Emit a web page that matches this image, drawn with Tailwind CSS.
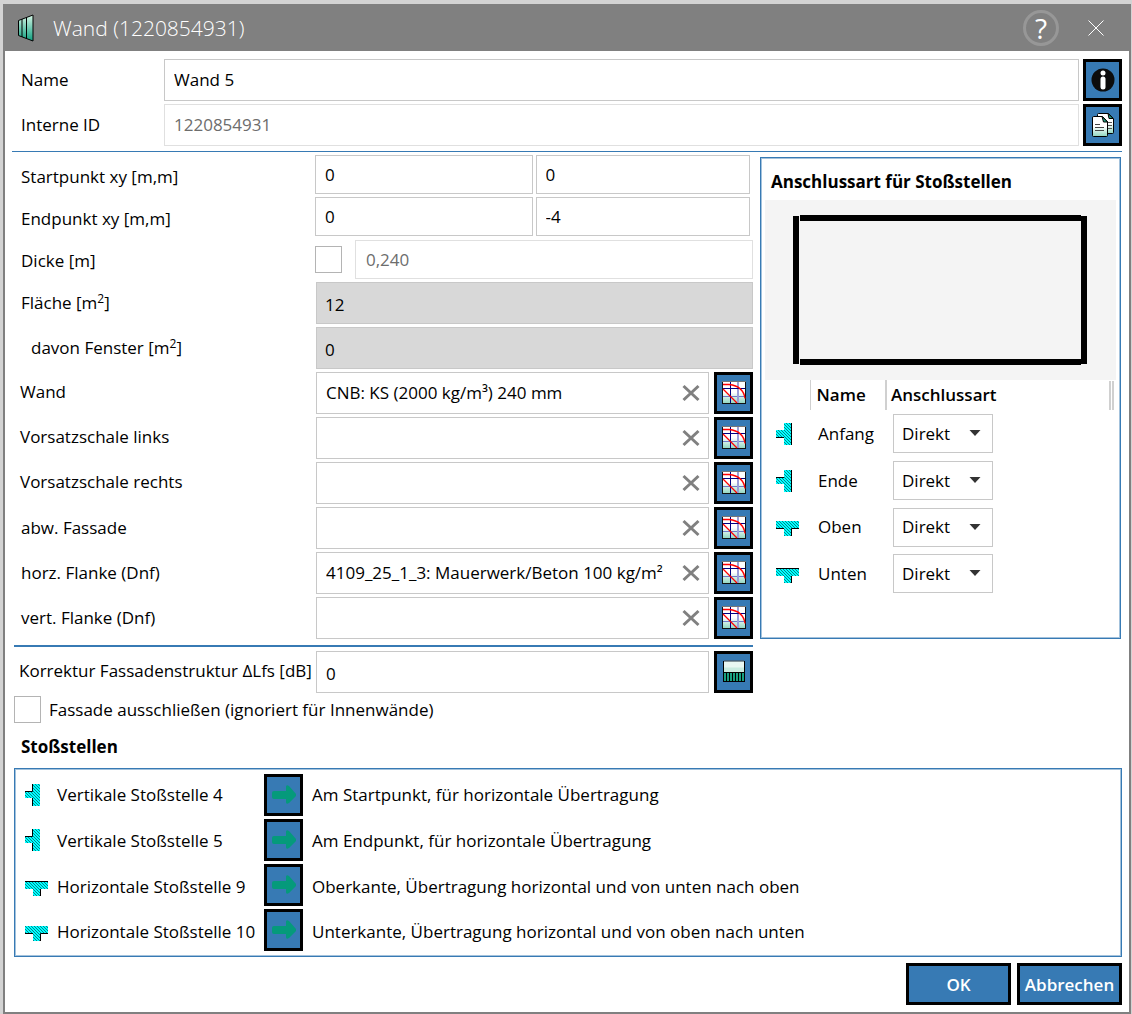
<!DOCTYPE html>
<html lang="de">
<head>
    <meta charset="UTF-8">
    <meta name="viewport" content="width=device-width, initial-scale=1.0">
    <title>Wand (1220854931)</title>
    <script src="https://cdn.jsdelivr.net/npm/@tailwindcss/browser@4"></script>
</head>
<body class="bg-[#d3d3d3] text-black text-[17px] leading-6 font-['Open_Sans','Noto_Sans',sans-serif]">
    <!-- Icons -->
    <svg class="absolute size-0">
        <defs>
            <linearGradient id="mint" x1="0" y1="0" x2="0" y2="1">
                <stop offset="0.5" stop-color="#ffffff"/>
                <stop offset="1" stop-color="#8fd6c0"/>
            </linearGradient>
            <linearGradient id="green" x1="0" y1="0" x2="0" y2="1">
                <stop offset="0" stop-color="#d4f5e4"/>
                <stop offset="1" stop-color="#0f9f80"/>
            </linearGradient>
            <pattern id="hatch" width="3" height="3" patternUnits="userSpaceOnUse">
                <rect width="3" height="3" fill="#00ffff"/>
                <path d="M0 0l3 3M-1 2l2 2M2 -1l2 2" stroke="#00505a" stroke-width="0.7"/>
            </pattern>
        </defs>
        <symbol id="chart" viewBox="0 0 24 24">
            <rect x="0.5" y="0.5" width="23" height="22" fill="url(#mint)"/>
            <path d="M0 15.5h23" stroke="#6f78c8"/>
            <path d="M16 1v22" stroke="#9b9fd8" stroke-width="2"/>
            <path d="M8.500 0v23M0 7.500h23" stroke="#000080"/>
            <path d="M0.500 0v23M23.500 1v22M0 22.500h24" stroke="#111" fill="none"/>
            <path d="M0 0.500h24" stroke="#777"/>
            <path d="M1 3.500h6c9 1 15 6 16 14M1 8l14 14" stroke="#ff0000" stroke-width="1.300" fill="none"/>
        </symbol>
        <symbol id="facade" viewBox="0 0 24 24">
            <rect x="1.500" y="1.500" width="21" height="11" fill="#c9ece0"/>
            <rect x="1.500" y="1.500" width="21" height="6" fill="#e9f8f2"/>
            <rect x="1.500" y="12.500" width="21" height="9" fill="#17a080"/>
            <path d="M1.500 1v21M22.500 1v21M1 12.500h22M1 21.500h22M4.500 13v9M7.500 13v9M10.500 13v9M13.500 13v9M16.500 13v9M19.500 13v9" stroke="#000"/>
            <path d="M2 1h20" stroke="#555"/>
        </symbol>
        <symbol id="arrow" viewBox="0 0 24 24">
            <path d="M2 8h12V4q0-3 3-1l7 8q1 1 0 2l-7 7q-3 2-3-1v-3H2q-2 0-2-2v-4q0-2 2-2z" fill="#059a7b"/>
        </symbol>
        <symbol id="joint-start" viewBox="0 0 24 24">
            <path d="M0 8h8V1h8v22H8v-8H0z" fill="url(#hatch)"/>
            <path d="M0 15.500h8M15.500 1v22" stroke="#000" fill="none"/>
        </symbol>
        <symbol id="joint-end" viewBox="0 0 24 24">
            <path d="M0 8h8V1h8v22H8v-8H0z" fill="url(#hatch)"/>
            <path d="M0 8.500h8M15.500 1v22" stroke="#000" fill="none"/>
        </symbol>
        <symbol id="joint-top" viewBox="0 0 24 24">
            <path d="M0 6h23v8h-7v7H8v-7H0z" fill="url(#hatch)"/>
            <path d="M0 13.500h8M15.500 21v-7.500H23" stroke="#000" fill="none"/>
        </symbol>
        <symbol id="joint-bottom" viewBox="0 0 24 24">
            <path d="M0 6h23v8h-7v7H8v-7H0z" fill="url(#hatch)"/>
            <path d="M0 6.500h23M15.500 14v7" stroke="#000" fill="none"/>
        </symbol>
        <symbol id="joint-vertical" viewBox="0 0 24 24">
            <path d="M0 8h8V1h7v22H8v-8H0z" fill="url(#hatch)"/>
            <path d="M7.500 1v7.500H0M7.500 15v8" stroke="#000" fill="none"/>
        </symbol>
        <symbol id="clear" viewBox="0 0 18 18">
            <path d="M1.500 2l15 14M16.500 2l-15 14" stroke="#808080" stroke-width="3"/>
        </symbol>
        <symbol id="caret" viewBox="0 0 12 6">
            <path d="M0.500 0h11L6 6z" fill="#333"/>
        </symbol>
    </svg>

    <div class="min-h-screen flex flex-col pt-1 pl-[3px] pr-px">
        <!-- Title bar -->
        <header class="bg-[#808080] h-[47px] flex items-center pl-[15px] pr-[27px]">
            <svg class="w-4 h-7" viewBox="0 0 16 28">
                <path d="M0.500 6.500L15 1v26L0.500 21.500z" fill="url(#green)" stroke="#000"/>
                <path d="M4 5v18M8.500 3.500v21" stroke="#000"/>
            </svg>
            <h1 class="ml-[19px] flex-1 text-[21px] leading-8 font-light text-white">Wand (1220854931)</h1>
            <button class="size-9 rounded-full border-3 border-[#979797] text-white text-[28px] leading-none flex items-center justify-center">?</button>
            <button class="ml-[29px] size-4" aria-label="Schließen">
                <svg class="size-4" viewBox="0 0 16 16"><path d="M0.500 0.500l15 15M15.500 0.500l-15 15" stroke="#fff"/></svg>
            </button>
        </header>

        <main class="flex-1 bg-white border-x-2 border-b-2 border-[#808080] pt-2 pl-[9px] pr-[7px] pb-[7px]">
            <!-- Name and ID -->
            <div class="grid grid-cols-[143px_1fr_39px] gap-y-[3px] items-center pl-[7px]">
                <label for="name">Name</label>
                <input id="name" type="text" value="Wand 5" class="h-[42px] mr-1 px-[9px] pb-0.5 border border-[#c8c8c8]">
                <button class="w-[39px] h-[42px] bg-[#377ab4] border-3 border-black flex items-center justify-center" aria-label="Info">
                    <svg class="size-6" viewBox="0 0 24 24">
                        <circle cx="12" cy="12" r="11.500" fill="#0c0c0c"/>
                        <circle cx="12" cy="5" r="2.500" fill="#fff"/>
                        <path d="M12 11v8" stroke="#fff" stroke-width="5" stroke-linecap="round"/>
                    </svg>
                </button>
                <label for="intern">Interne ID</label>
                <input id="intern" type="text" value="1220854931" disabled class="h-[42px] mr-1 px-[9px] pb-0.5 border border-[#e0e0e0] text-[#6d6d6d]">
                <button class="w-[39px] h-[42px] bg-[#377ab4] border-3 border-black flex items-center justify-center" aria-label="Kopieren">
                    <svg class="size-6" viewBox="0 0 24 24">
                        <path d="M6.500 1.500q0-1 1-1h10l5 5v14q0 1-1 1h-14q-1 0-1-1z" fill="url(#mint)" stroke="#000"/>
                        <path d="M17 0.500l5 5h-4z" fill="#1fa583" stroke="#000"/>
                        <path d="M17 9.500h4M17 12.500h4M17 15.500h4" stroke="#555"/>
                        <path d="M1.500 5q0-1.500 1-1.500h9l5 5v14q0 1-1 1h-13q-1 0-1-1z" fill="url(#mint)" stroke="#000"/>
                        <path d="M11 3.500l5.500 5.500h-4z" fill="#1fa583" stroke="#000"/>
                        <path d="M4 11.500h5M4 14.500h9M4 17.500h9" stroke="#444"/>
                    </svg>
                </button>
            </div>

            <div class="mt-[5px] -ml-0.5 h-px bg-[#377ab4]"></div>

            <div class="flex items-start gap-[7px] mt-[3px] pr-px">
                <!-- Wall properties -->
                <div class="flex-1 min-w-0">
                    <div class="grid grid-cols-[301px_1fr_1fr] gap-x-[3px] gap-y-[3px] items-center pr-[3px]">
                        <label for="startx" class="pl-[7px] pt-1">Startpunkt xy [m,m]</label>
                        <input id="startx" type="text" value="0" class="h-[39px] min-w-0 -ml-[3px] px-[9px] border border-[#c8c8c8]">
                        <input type="text" value="0" aria-label="Startpunkt y" class="h-[39px] min-w-0 px-[9px] border border-[#c8c8c8]">
                        <label for="endx" class="pl-[7px] pt-1">Endpunkt xy [m,m]</label>
                        <input id="endx" type="text" value="0" class="h-[39px] min-w-0 -ml-[3px] px-[9px] border border-[#c8c8c8]">
                        <input type="text" value="-4" aria-label="Endpunkt y" class="h-[39px] min-w-0 px-[9px] border border-[#c8c8c8]">
                    </div>
                    <div class="flex items-center mt-1">
                        <label for="dicke" class="w-[301px] pl-[7px] pt-0.5">Dicke [m]</label>
                        <input type="checkbox" aria-label="Dicke überschreiben" class="appearance-none size-[27px] border border-[#b4b4b4] mr-[13px]">
                        <input id="dicke" type="text" value="0,240" disabled class="flex-1 min-w-0 h-[39px] px-[10px] border border-[#e0e0e0] text-[#6d6d6d]">
                    </div>
                    <div class="grid grid-cols-[302px_1fr] gap-y-[3px] items-center mt-[3px]">
                        <label for="flaeche" class="pl-[7px]">Fläche [m<sup class="text-xs">2</sup>]</label>
                        <input id="flaeche" type="text" value="12" readonly class="h-[42px] min-w-0 px-[8px] pt-[3px] bg-[#d8d8d8] border border-[#c8c8c8]">
                        <label for="fenster" class="pl-[17px]">davon Fenster [m<sup class="text-xs">2</sup>]</label>
                        <input id="fenster" type="text" value="0" readonly class="h-[42px] min-w-0 px-[8px] pt-[3px] bg-[#d8d8d8] border border-[#c8c8c8]">
                    </div>
                    <div class="grid grid-cols-[302px_1fr_39px] gap-y-[3px] items-center mt-[3px]">
                        <label for="wand" class="pl-[6px] pb-0.5">Wand</label>
                        <div class="h-[42px] mr-[5px] border border-[#c8c8c8] flex items-center pl-[9px] pr-2">
                            <input id="wand" type="text" value="CNB: KS (2000 kg/m³) 240 mm" class="flex-1 min-w-0">
                            <button aria-label="Löschen"><svg class="size-[18px]"><use href="#clear"/></svg></button>
                        </div>
                        <button class="w-[39px] h-[42px] bg-[#377ab4] border-3 border-black flex items-center justify-center" aria-label="Wand wählen"><svg class="size-6"><use href="#chart"/></svg></button>

                        <label for="vorlinks" class="pl-[6px] pb-0.5">Vorsatzschale links</label>
                        <div class="h-[42px] mr-[5px] border border-[#c8c8c8] flex items-center pl-[9px] pr-2">
                            <input id="vorlinks" type="text" class="flex-1 min-w-0">
                            <button aria-label="Löschen"><svg class="size-[18px]"><use href="#clear"/></svg></button>
                        </div>
                        <button class="w-[39px] h-[42px] bg-[#377ab4] border-3 border-black flex items-center justify-center" aria-label="Vorsatzschale links wählen"><svg class="size-6"><use href="#chart"/></svg></button>

                        <label for="vorrechts" class="pl-[6px] pb-0.5">Vorsatzschale rechts</label>
                        <div class="h-[42px] mr-[5px] border border-[#c8c8c8] flex items-center pl-[9px] pr-2">
                            <input id="vorrechts" type="text" class="flex-1 min-w-0">
                            <button aria-label="Löschen"><svg class="size-[18px]"><use href="#clear"/></svg></button>
                        </div>
                        <button class="w-[39px] h-[42px] bg-[#377ab4] border-3 border-black flex items-center justify-center" aria-label="Vorsatzschale rechts wählen"><svg class="size-6"><use href="#chart"/></svg></button>

                        <label for="fassade" class="pl-[7px]">abw. Fassade</label>
                        <div class="h-[42px] mr-[5px] border border-[#c8c8c8] flex items-center pl-[9px] pr-2">
                            <input id="fassade" type="text" class="flex-1 min-w-0">
                            <button aria-label="Löschen"><svg class="size-[18px]"><use href="#clear"/></svg></button>
                        </div>
                        <button class="w-[39px] h-[42px] bg-[#377ab4] border-3 border-black flex items-center justify-center" aria-label="Fassade wählen"><svg class="size-6"><use href="#chart"/></svg></button>

                        <label for="horz" class="pl-[7px]">horz. Flanke (Dnf)</label>
                        <div class="h-[42px] mr-[5px] border border-[#c8c8c8] flex items-center pl-[9px] pr-2">
                            <input id="horz" type="text" value="4109_25_1_3: Mauerwerk/Beton 100 kg/m²" class="flex-1 min-w-0">
                            <button aria-label="Löschen"><svg class="size-[18px]"><use href="#clear"/></svg></button>
                        </div>
                        <button class="w-[39px] h-[42px] bg-[#377ab4] border-3 border-black flex items-center justify-center" aria-label="Horizontale Flanke wählen"><svg class="size-6"><use href="#chart"/></svg></button>

                        <label for="vert" class="pl-[7px]">vert. Flanke (Dnf)</label>
                        <div class="h-[42px] mr-[5px] border border-[#c8c8c8] flex items-center pl-[9px] pr-2">
                            <input id="vert" type="text" class="flex-1 min-w-0">
                            <button aria-label="Löschen"><svg class="size-[18px]"><use href="#clear"/></svg></button>
                        </div>
                        <button class="w-[39px] h-[42px] bg-[#377ab4] border-3 border-black flex items-center justify-center" aria-label="Vertikale Flanke wählen"><svg class="size-6"><use href="#chart"/></svg></button>
                    </div>

                    <div class="mt-[6px] h-0.5 bg-[#377ab4]"></div>

                    <div class="grid grid-cols-[302px_1fr_39px] items-center mt-1">
                        <label for="korrektur" class="pl-[5px] pb-0.5 whitespace-nowrap">Korrektur Fassadenstruktur ΔLfs [dB]</label>
                        <input id="korrektur" type="text" value="0" class="h-[42px] min-w-0 mr-[5px] px-[9px] pt-[3px] border border-[#c8c8c8]">
                        <button class="w-[39px] h-[42px] bg-[#377ab4] border-3 border-black flex items-center justify-center" aria-label="Fassadenstruktur"><svg class="size-6"><use href="#facade"/></svg></button>
                    </div>
                    <label class="flex items-center mt-[3px]">
                        <input type="checkbox" class="appearance-none size-[27px] border border-[#b4b4b4] mr-2">
                        Fassade ausschließen (ignoriert für Innenwände)
                    </label>
                </div>

                <!-- Connection types -->
                <section class="w-[361px] h-[482px] mt-0.5 border border-[#377ab4] inset-ring inset-ring-[#a3c2dc] p-px">
                    <h2 class="h-[41px] pl-[9px] pt-[11px] font-bold">Anschlussart für Stoßstellen</h2>
                    <div class="px-[3px]">
                        <svg class="w-full h-[180px] bg-[#f4f4f4]" viewBox="0 0 351 180">
                            <path d="M35 18h281M35 162h281" stroke="#000" stroke-width="6"/>
                            <path d="M31 16v148M319 16v148" stroke="#000" stroke-width="6"/>
                        </svg>
                        <table class="w-full text-left">
                            <thead>
                                <tr class="h-[30px]">
                                    <th class="w-[45px] border-r border-[#d0d0d0]"></th>
                                    <th class="w-[76px] pl-[6px] border-r-2 border-[#d0d0d0] font-semibold">Name</th>
                                    <th class="pl-[4px] font-semibold">
                                        <div class="flex items-center justify-between pr-0.5">Anschlussart<span class="w-[5px] h-[29px] border-x-2 border-[#d0d0d0]"></span></div>
                                    </th>
                                </tr>
                            </thead>
                            <tbody>
                                <tr class="h-[47px]">
                                    <td class="pl-[11px]"><svg class="size-6"><use href="#joint-start"/></svg></td>
                                    <td class="pl-2"><label for="anfang">Anfang</label></td>
                                    <td class="pl-[7px]">
                                        <div class="relative w-[100px]">
                                            <select id="anfang" class="appearance-none w-full h-[39px] pl-2 border border-[#c8c8c8]"><option>Direkt</option></select>
                                            <svg class="absolute right-3 top-4 w-3 h-1.5 pointer-events-none"><use href="#caret"/></svg>
                                        </div>
                                    </td>
                                </tr>
                                <tr class="h-[47px]">
                                    <td class="pl-[11px]"><svg class="size-6"><use href="#joint-end"/></svg></td>
                                    <td class="pl-2"><label for="ende">Ende</label></td>
                                    <td class="pl-[7px]">
                                        <div class="relative w-[100px]">
                                            <select id="ende" class="appearance-none w-full h-[39px] pl-2 border border-[#c8c8c8]"><option>Direkt</option></select>
                                            <svg class="absolute right-3 top-4 w-3 h-1.5 pointer-events-none"><use href="#caret"/></svg>
                                        </div>
                                    </td>
                                </tr>
                                <tr class="h-[46px]">
                                    <td class="pl-[11px]"><svg class="size-6"><use href="#joint-top"/></svg></td>
                                    <td class="pl-2"><label for="oben">Oben</label></td>
                                    <td class="pl-[7px]">
                                        <div class="relative w-[100px]">
                                            <select id="oben" class="appearance-none w-full h-[39px] pl-2 border border-[#c8c8c8]"><option>Direkt</option></select>
                                            <svg class="absolute right-3 top-4 w-3 h-1.5 pointer-events-none"><use href="#caret"/></svg>
                                        </div>
                                    </td>
                                </tr>
                                <tr class="h-[47px]">
                                    <td class="pl-[11px]"><svg class="size-6"><use href="#joint-bottom"/></svg></td>
                                    <td class="pl-2"><label for="unten">Unten</label></td>
                                    <td class="pl-[7px]">
                                        <div class="relative w-[100px]">
                                            <select id="unten" class="appearance-none w-full h-[39px] pl-2 border border-[#c8c8c8]"><option>Direkt</option></select>
                                            <svg class="absolute right-3 top-4 w-3 h-1.5 pointer-events-none"><use href="#caret"/></svg>
                                        </div>
                                    </td>
                                </tr>
                            </tbody>
                        </table>
                    </div>
                </section>
            </div>

            <!-- Joints -->
            <h2 class="mt-3 pl-[7px] font-bold">Stoßstellen</h2>
            <div class="mt-[9px] border border-[#377ab4] inset-ring inset-ring-[#a3c2dc] pl-[10px] pt-[3px] pb-1">
                <table class="w-full">
                    <tbody>
                        <tr class="h-[45px]">
                            <td class="w-8"><svg class="size-6"><use href="#joint-vertical"/></svg></td>
                            <td class="w-[207px] whitespace-nowrap">Vertikale Stoßstelle 4</td>
                            <td class="w-12"><button class="w-[39px] h-[42px] bg-[#377ab4] border-3 border-black flex items-center justify-center" aria-label="Öffnen"><svg class="size-6"><use href="#arrow"/></svg></button></td>
                            <td>Am Startpunkt, für horizontale Übertragung</td>
                        </tr>
                        <tr class="h-[45px]">
                            <td><svg class="size-6"><use href="#joint-vertical"/></svg></td>
                            <td class="pt-0.5 whitespace-nowrap">Vertikale Stoßstelle 5</td>
                            <td><button class="w-[39px] h-[42px] bg-[#377ab4] border-3 border-black flex items-center justify-center" aria-label="Öffnen"><svg class="size-6"><use href="#arrow"/></svg></button></td>
                            <td class="pt-0.5">Am Endpunkt, für horizontale Übertragung</td>
                        </tr>
                        <tr class="h-[45px]">
                            <td class="pt-1"><svg class="size-6"><use href="#joint-bottom"/></svg></td>
                            <td class="pt-1 whitespace-nowrap">Horizontale Stoßstelle 9</td>
                            <td><button class="w-[39px] h-[42px] bg-[#377ab4] border-3 border-black flex items-center justify-center" aria-label="Öffnen"><svg class="size-6"><use href="#arrow"/></svg></button></td>
                            <td class="pt-1">Oberkante, Übertragung horizontal und von unten nach oben</td>
                        </tr>
                        <tr class="h-[45px]">
                            <td class="pt-1"><svg class="size-6"><use href="#joint-top"/></svg></td>
                            <td class="pt-1 whitespace-nowrap">Horizontale Stoßstelle 10</td>
                            <td><button class="w-[39px] h-[42px] bg-[#377ab4] border-3 border-black flex items-center justify-center" aria-label="Öffnen"><svg class="size-6"><use href="#arrow"/></svg></button></td>
                            <td class="pt-1">Unterkante, Übertragung horizontal und von oben nach unten</td>
                        </tr>
                    </tbody>
                </table>
            </div>

            <div class="flex justify-end gap-[6px] mt-[6px]">
                <button class="w-[105px] h-[42px] bg-[#377ab4] border-3 border-black pt-0.5 text-white font-semibold">OK</button>
                <button class="w-[105px] h-[42px] bg-[#377ab4] border-3 border-black pt-0.5 text-white font-semibold">Abbrechen</button>
            </div>
        </main>
    </div>
</body>
</html>
